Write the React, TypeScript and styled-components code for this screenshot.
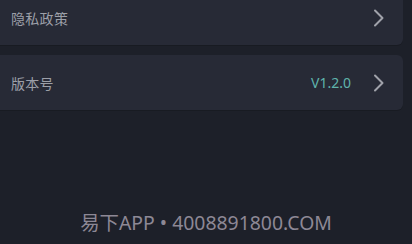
import React from "react";
import styled, { createGlobalStyle } from "styled-components";

const Global = createGlobalStyle`
  html, body {
    margin: 0;
    padding: 0;
    background: #1d2029;
  }
  body {
    font-family: "Noto Sans", "Noto Sans CJK SC", sans-serif;
  }
`;

const Page = styled.div`
  width: 412px;
  height: 244px;
  overflow: hidden;
  background: #1d2029;
  display: flex;
  flex-direction: column;
`;

const List = styled.div`
  display: flex;
  flex-direction: column;
  gap: 10px;
  width: 403px;
  margin-top: -10px;
`;

const Row = styled.div`
  height: 55px;
  background: #272a36;
  border-radius: 0 6px 6px 0;
  display: flex;
  align-items: center;
  padding: 0 18px 0 11px;
  box-sizing: border-box;
  box-shadow: 0 1px 0 rgba(0, 0, 0, 0.15);
`;

const Label = styled.span`
  flex: 1;
  font-family: "Noto Sans CJK SC", sans-serif;
  font-size: 14px;
  color: #9c9fa8;
  letter-spacing: 0.3px;
`;

const Value = styled.span`
  font-size: 14px;
  color: #5fb3ab;
  margin-right: 22px;
`;

const Chevron = () => (
  <svg width="12" height="18" viewBox="0 0 12 18" fill="none">
    <path
      d="M2 1.5 L9.5 9 L2 16.5"
      stroke="#a0a2aa"
      strokeWidth="2"
      strokeLinecap="round"
      strokeLinejoin="round"
    />
  </svg>
);

const Footer = styled.div`
  flex: 1;
  display: flex;
  align-items: flex-end;
  justify-content: center;
  padding-bottom: 8px;
  font-size: 19.4px;
  color: #8d8895;
`;

export default function App() {
  return (
    <Page>
      <Global />
      <List>
        <Row>
          <Label>隐私政策</Label>
          <Chevron />
        </Row>
        <Row>
          <Label>版本号</Label>
          <Value>V1.2.0</Value>
          <Chevron />
        </Row>
      </List>
      <Footer>易下APP • 4008891800.COM</Footer>
    </Page>
  );
}
